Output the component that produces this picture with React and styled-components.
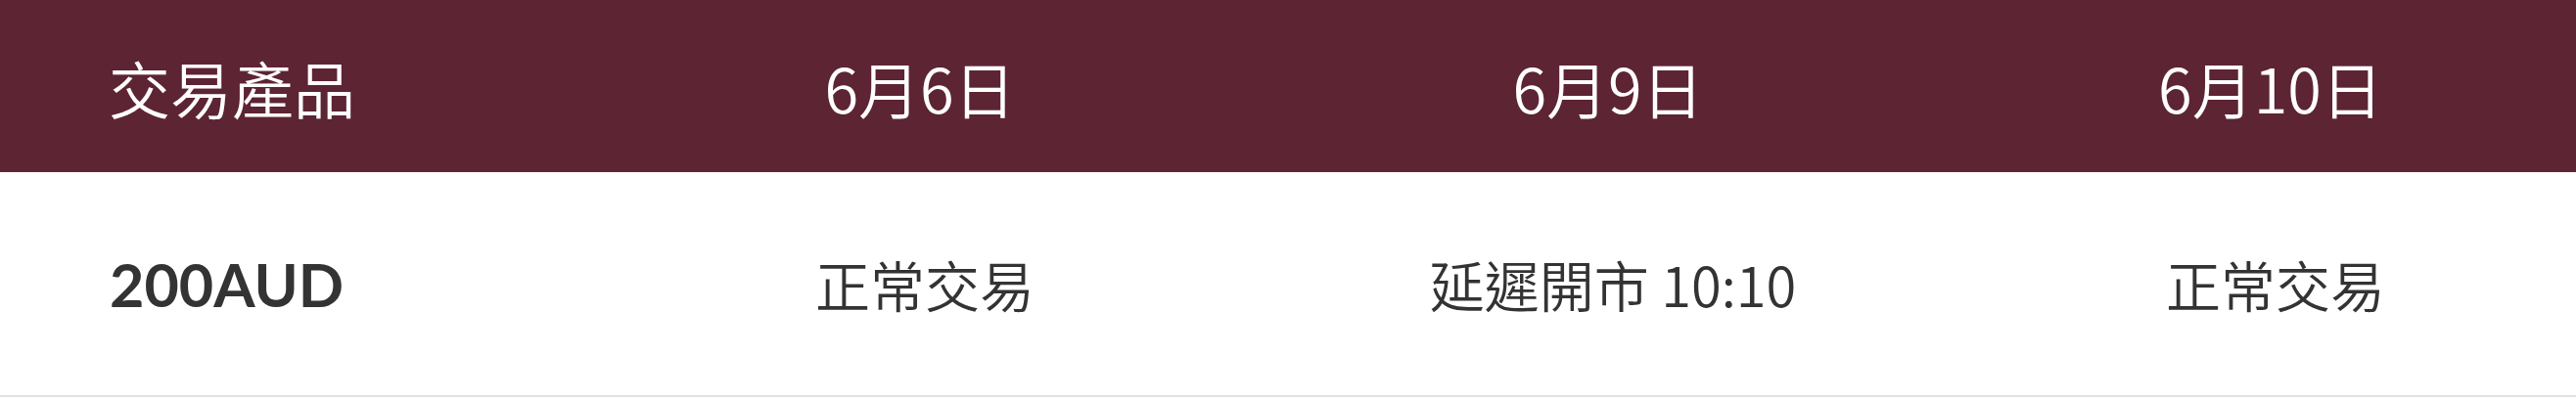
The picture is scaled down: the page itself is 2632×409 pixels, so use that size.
import React from 'react';
import styled, {createGlobalStyle} from 'styled-components'

const rows = [
  {name: '200AUD', days: ['正常交易', '延遲開市 10:10', '正常交易']}
];

const dates = ['6月6日', '6月9日', '6月10日'];

export default () => {
  return (
    <>
      <Global/>
      <Table>
        <Head>
          <HeadCell align="left">交易產品</HeadCell>
          {dates.map(d => <HeadCell key={d}>{d}</HeadCell>)}
        </Head>
        {rows.map(r => (
          <Row key={r.name}>
            <Name>{r.name}</Name>
            {r.days.map((d, i) => <Cell key={i}>{d}</Cell>)}
          </Row>
        ))}
      </Table>
    </>
  )
}

const Global = createGlobalStyle`
    html, body {
      margin: 0;
      padding: 0;
      background: #fff;
    }
    body {
      font-family: "Noto Sans CJK TC", "Noto Sans", sans-serif;
    }
  `;

const Table = styled.div`
    width: 2632px;
    box-shadow: 0px 1px 3px rgba(0, 0, 0, 0.12);
  `;

const cols = `
    display: grid;
    grid-template-columns: 590px 700px 706px 1fr;
    align-items: center;
  `;

const Head = styled.div`
    ${cols};
    height: 176px;
    background-color: #5d2433;
    color: #fff;
  `;

const HeadCell = styled.div`
    font-size: 63px;
    font-weight: 350;
    line-height: 1;
    text-align: ${props => props.align || 'center'};
    padding-left: ${props => props.align === 'left' ? '111px' : '0'};
    
    &:last-child {
      padding-left: 12px;
    }
  `;

const Row = styled.div`
    ${cols};
    height: 228px;
    background-color: #fff;
    color: #333;
    border-bottom: 2px solid #e2e2e2;
  `;

const Name = styled.div`
    font-family: "Lato", "Noto Sans", sans-serif;
    font-weight: 700;
    font-size: 61px;
    padding-left: 112px;
  `;

const Cell = styled.div`
    font-size: 56px;
    font-weight: 350;
    line-height: 1;
    text-align: center;
    padding-left: 10px;
    
    &:last-child {
      padding-left: 22px;
    }
  `;
